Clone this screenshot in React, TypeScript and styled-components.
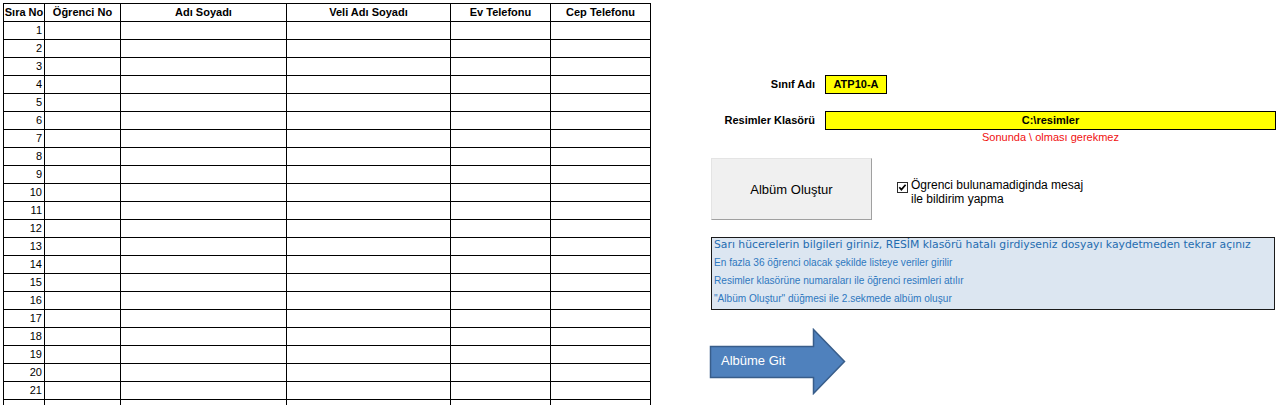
import React from "react";
import styled, { createGlobalStyle } from "styled-components";

const GlobalStyle = createGlobalStyle`
  html, body {
    margin: 0;
    padding: 0;
    background: #ffffff;
    overflow: hidden;
  }
  body {
    font-family: "Liberation Sans", Arial, sans-serif;
    color: #000;
  }
`;

const Sheet = styled.div`
  display: flex;
  align-items: flex-start;
  box-sizing: border-box;
  height: 405px;
  padding: 3px 0 0 3px;
  overflow: hidden;
`;

const StudentGrid = styled.div`
  flex: none;
  display: grid;
  grid-template-columns: 41px 76px 166px 164px 100px 100px;
  grid-auto-rows: 18px;
  border-left: 1px solid #000;
  border-top: 1px solid #000;
`;

const Cell = styled.div<{ $head?: boolean; $num?: boolean }>`
  box-sizing: border-box;
  border-right: 1px solid #000;
  border-bottom: 1px solid #000;
  font-size: 11px;
  line-height: 17px;
  font-weight: ${(p) => (p.$head ? 700 : 400)};
  text-align: ${(p) => (p.$num ? "right" : "center")};
  padding-right: ${(p) => (p.$num ? "2px" : "0")};
  white-space: nowrap;
  overflow: hidden;
`;

const Panel = styled.div`
  flex: none;
  display: flex;
  flex-direction: column;
  align-items: flex-start;
  width: 565px;
  margin-left: 60px;
  padding-top: 72px;
`;

const Form = styled.div`
  display: grid;
  grid-template-columns: 114px 451px;
  row-gap: 17px;
  align-items: start;
`;

const Label = styled.div`
  box-sizing: border-box;
  padding-right: 10px;
  text-align: right;
  font-size: 11px;
  font-weight: 700;
  line-height: 19px;
  white-space: nowrap;
`;

const FieldStack = styled.div`
  display: flex;
  flex-direction: column;
`;

const YellowCell = styled.div<{ $w: number }>`
  box-sizing: border-box;
  width: ${(p) => p.$w}px;
  height: 19px;
  background: #ffff00;
  border: 1px solid #000;
  font-size: 11px;
  font-weight: 700;
  line-height: 17px;
  text-align: center;
  white-space: nowrap;
`;

const Note = styled.div`
  width: 451px;
  text-align: center;
  font-size: 11px;
  line-height: 14px;
  color: #f01010;
`;

const ActionRow = styled.div`
  display: flex;
  align-items: flex-start;
  gap: 25px;
  margin-top: 14px;
`;

const FormButton = styled.button`
  box-sizing: border-box;
  width: 161px;
  height: 62px;
  padding: 0;
  background: #f0f0f0;
  border: 1px solid;
  border-color: #e4e4e4 #a0a0a0 #a0a0a0 #e4e4e4;
  font-family: "Liberation Sans", Arial, sans-serif;
  font-size: 13px;
  color: #000;
  cursor: default;
`;

const CheckOption = styled.label`
  display: flex;
  align-items: flex-start;
  gap: 3px;
  margin-top: 20px;
  font-size: 12px;
  line-height: 14px;
  color: #000;
`;

const CheckBox = styled.svg`
  flex: none;
  width: 11px;
  height: 11px;
  margin-top: 4px;
`;

const InfoBox = styled.div`
  box-sizing: border-box;
  width: 564px;
  height: 73px;
  margin-top: 17px;
  padding-left: 2px;
  background: #dce6f1;
  border: 1px solid #1a1a1a;
  overflow: hidden;
`;

const InfoList = styled.div`
  margin-top: -2px;
`;

const InfoLine = styled.div<{ $lead?: boolean }>`
  height: 18px;
  line-height: 18px;
  white-space: nowrap;
  font-family: ${(p) =>
    p.$lead ? '"DejaVu Sans", Verdana, sans-serif' : '"Liberation Sans", Arial, sans-serif'};
  font-size: ${(p) => (p.$lead ? "10.8px" : "10.1px")};
  color: ${(p) => (p.$lead ? "#1f6cb0" : "#2f78bf")};
`;

const ArrowLink = styled.div`
  position: relative;
  width: 137px;
  height: 67px;
  margin-top: 18px;
  margin-left: -2px;
`;

const ArrowLabel = styled.span`
  position: absolute;
  left: 12px;
  top: 25px;
  font-size: 13px;
  line-height: 16px;
  color: #ffffff;
  white-space: nowrap;
`;

const headers = ["Sıra No", "Öğrenci No", "Adı Soyadı", "Veli Adı Soyadı", "Ev Telefonu", "Cep Telefonu"];
const rows = Array.from({ length: 22 }, (_, i) => i + 1);

export default function App() {
  return (
    <>
      <GlobalStyle />
      <Sheet>
        <StudentGrid>
          {headers.map((h) => (
            <Cell key={h} $head>
              {h}
            </Cell>
          ))}
          {rows.map((n) => (
            <React.Fragment key={n}>
              <Cell $num>{n <= 21 ? n : ""}</Cell>
              <Cell />
              <Cell />
              <Cell />
              <Cell />
              <Cell />
            </React.Fragment>
          ))}
        </StudentGrid>

        <Panel>
          <Form>
            <Label>Sınıf Adı</Label>
            <YellowCell $w={62}>ATP10-A</YellowCell>
            <Label>Resimler Klasörü</Label>
            <FieldStack>
              <YellowCell $w={451}>C:\resimler</YellowCell>
              <Note>Sonunda \ olması gerekmez</Note>
            </FieldStack>
          </Form>

          <ActionRow>
            <FormButton type="button">Albüm Oluştur</FormButton>
            <CheckOption>
              <CheckBox viewBox="0 0 11 11">
                <rect x="0.5" y="0.5" width="10" height="10" fill="#fff" stroke="#2b2b2b" />
                <polyline points="2.3,5.2 4.4,7.6 8.6,2.8" fill="none" stroke="#000" strokeWidth="1.7" />
              </CheckBox>
              <span>
                Ögrenci bulunamadiginda mesaj
                <br />
                ile bildirim yapma
              </span>
            </CheckOption>
          </ActionRow>

          <InfoBox>
            <InfoList>
              <InfoLine $lead>
                Sarı hücerelerin bilgileri giriniz, RESİM klasörü hatalı girdiyseniz dosyayı kaydetmeden tekrar açınız
              </InfoLine>
              <InfoLine>En fazla 36 öğrenci olacak şekilde listeye veriler girilir</InfoLine>
              <InfoLine>Resimler klasörüne numaraları ile öğrenci resimleri atılır</InfoLine>
              <InfoLine>"Albüm Oluştur" düğmesi ile 2.sekmede albüm oluşur</InfoLine>
            </InfoList>
          </InfoBox>

          <ArrowLink>
            <svg width="137" height="67" viewBox="0 0 137 67">
              <path
                d="M1.5 18.5 H104.5 V1.5 L135.5 33.5 L104.5 65.5 V49.5 H1.5 Z"
                fill="#4f81bd"
                stroke="#385d8a"
                strokeWidth="1.5"
                strokeLinejoin="miter"
              />
            </svg>
            <ArrowLabel>Albüme Git</ArrowLabel>
          </ArrowLink>
        </Panel>
      </Sheet>
    </>
  );
}
